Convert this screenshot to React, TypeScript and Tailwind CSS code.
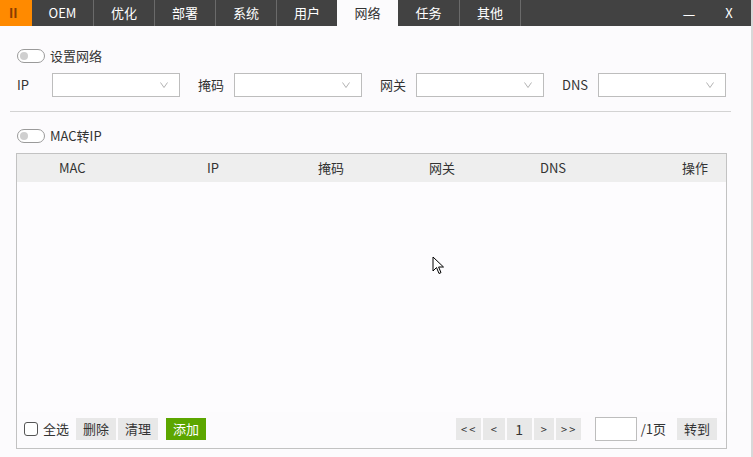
import React from 'react';

const tabs = ['OEM', '优化', '部署', '系统', '用户', '网络', '任务', '其他'];

const Toggle: React.FC = () => (
  <span className="relative inline-block w-[28px] h-[14px] rounded-full border border-[#9a9a9a] bg-white">
    <span className="absolute left-[2px] top-[2px] w-[8px] h-[8px] rounded-full bg-[#cfcfcf]" />
  </span>
);

const Select: React.FC = () => (
  <div className="w-[128px] h-[24px] border border-[#bdbdbd] bg-white flex items-center justify-end pr-[11px]">
    <svg width="8" height="6" viewBox="0 0 8 6" className="text-[#a0a0a0]">
      <path d="M0.5 0.5 L4 5.5 L7.5 0.5" fill="none" stroke="currentColor" strokeWidth="0.8" />
    </svg>
  </div>
);

const Field: React.FC<{ label: string; w?: string }> = ({ label, w = 'w-[36px]' }) => (
  <div className="flex items-center">
    <span className={`${w} text-[13px] text-[#333]`}>{label}</span>
    <Select />
  </div>
);

const GrayBtn: React.FC<{ children: React.ReactNode; w: string }> = ({ children, w }) => (
  <button className={`${w} h-[22px] bg-[#e8e8e8] text-[13px] text-[#333] flex items-center justify-center`}>
    {children}
  </button>
);

export default function App() {
  return (
    <div
      className="relative w-[753px] h-[457px] bg-[#fcfbfd] overflow-hidden border-r-2 border-[#d8d8d8]"
      style={{ fontFamily: '"Noto Sans CJK SC", "Liberation Sans", sans-serif' }}
    >
      {/* title bar */}
      <div className="h-[26px] bg-[#424242] flex items-stretch">
        <div className="w-[32px] bg-[#ff8a00] flex items-center pl-[9px] text-[13px] text-[#8a3d00] font-bold">II</div>
        {tabs.map((t, i) => (
          <div
            key={t}
            className={`w-[61px] flex items-center justify-center text-[13px] ${
              t === '网络' ? 'bg-[#fcfbfd] text-[#333]' : 'text-white'
            } ${i > 0 && t !== '网络' && tabs[i - 1] !== '网络' ? 'border-l border-[#6a6a6a]' : ''}`}
          >
            {t}
          </div>
        ))}
        <div className="flex-1 bg-[#424242] border-l border-[#6a6a6a]" />
        <div className="w-[44px] flex items-center justify-center text-white text-[14px]">—</div>
        <div className="w-[40px] flex items-center justify-center text-white text-[13px] pr-[4px]">X</div>
      </div>

      {/* network settings */}
      <div className="pl-[17px] pt-[23px]">
        <div className="flex items-center gap-[5px] h-[14px]">
          <Toggle />
          <span className="text-[13px] text-[#333]">设置网络</span>
        </div>
        <div className="flex items-center mt-[10px] gap-[18px]">
          <Field label="IP" w="w-[35px]" />
          <Field label="掩码" />
          <Field label="网关" />
          <Field label="DNS" />
        </div>
      </div>

      <div className="ml-[10px] mr-[20px] mt-[14px] border-t border-[#d3d3d3]" />

      {/* mac to ip */}
      <div className="pl-[17px] pt-[17px]">
        <div className="flex items-center gap-[5px] h-[14px]">
          <Toggle />
          <span className="text-[13px] text-[#333]">MAC转IP</span>
        </div>
      </div>

      <div className="ml-[16px] mt-[10px] w-[711px] h-[296px] border border-[#c2c2c2] flex flex-col">
        <div className="h-[28px] bg-[#eeeeee] flex items-center text-[13px] text-[#333]">
          <div className="w-[190px] pl-[42px]">MAC</div>
          <div className="w-[111px]">IP</div>
          <div className="w-[111px]">掩码</div>
          <div className="w-[111px]">网关</div>
          <div className="w-[142px]">DNS</div>
          <div className="flex-1">操作</div>
        </div>
        <div className="flex-1 bg-[#fdfcfe]" />
        <div className="h-[36px] flex items-start pt-[6px] pl-[7px] pr-[9px]">
          <label className="flex items-center h-[22px] mr-[7px]">
            <span className="w-[14px] h-[14px] rounded-[3px] border border-[#555] bg-white" />
            <span className="ml-[5px] text-[13px] text-[#333]">全选</span>
          </label>
          <GrayBtn w="w-[40px]">删除</GrayBtn>
          <span className="w-[2px]" />
          <GrayBtn w="w-[40px]">清理</GrayBtn>
          <button className="ml-[8px] w-[40px] h-[22px] bg-[#5ca600] text-[13px] text-white flex items-center justify-center">
            添加
          </button>
          <div className="flex-1" />
          <div className="flex items-center gap-[2px]">
            <GrayBtn w="w-[25px]"><span className="text-[11px] tracking-[2px] pl-[2px]">&lt;&lt;</span></GrayBtn>
            <GrayBtn w="w-[22px]"><span className="text-[11px]">&lt;</span></GrayBtn>
            <GrayBtn w="w-[25px]"><span className="text-[14px]">1</span></GrayBtn>
            <GrayBtn w="w-[20px]"><span className="text-[11px]">&gt;</span></GrayBtn>
            <GrayBtn w="w-[25px]"><span className="text-[11px] tracking-[2px] pl-[2px]">&gt;&gt;</span></GrayBtn>
          </div>
          <div className="ml-[14px] w-[42px] h-[24px] -mt-[1px] border border-[#bdbdbd] bg-white" />
          <span className="ml-[4px] h-[22px] flex items-center text-[13px] text-[#333]">/1页</span>
          <span className="w-[11px]" />
          <GrayBtn w="w-[40px]">转到</GrayBtn>
        </div>
      </div>

      {/* mouse cursor */}
      <svg className="absolute left-[432px] top-[256px]" width="14" height="20" viewBox="0 0 14 20">
        <path d="M1 1 L1 15 L4.5 11.5 L7 17.5 L9 16.6 L6.6 11 L11.5 11 Z" fill="white" stroke="black" strokeWidth="1" strokeLinejoin="round" />
      </svg>
    </div>
  );
}
